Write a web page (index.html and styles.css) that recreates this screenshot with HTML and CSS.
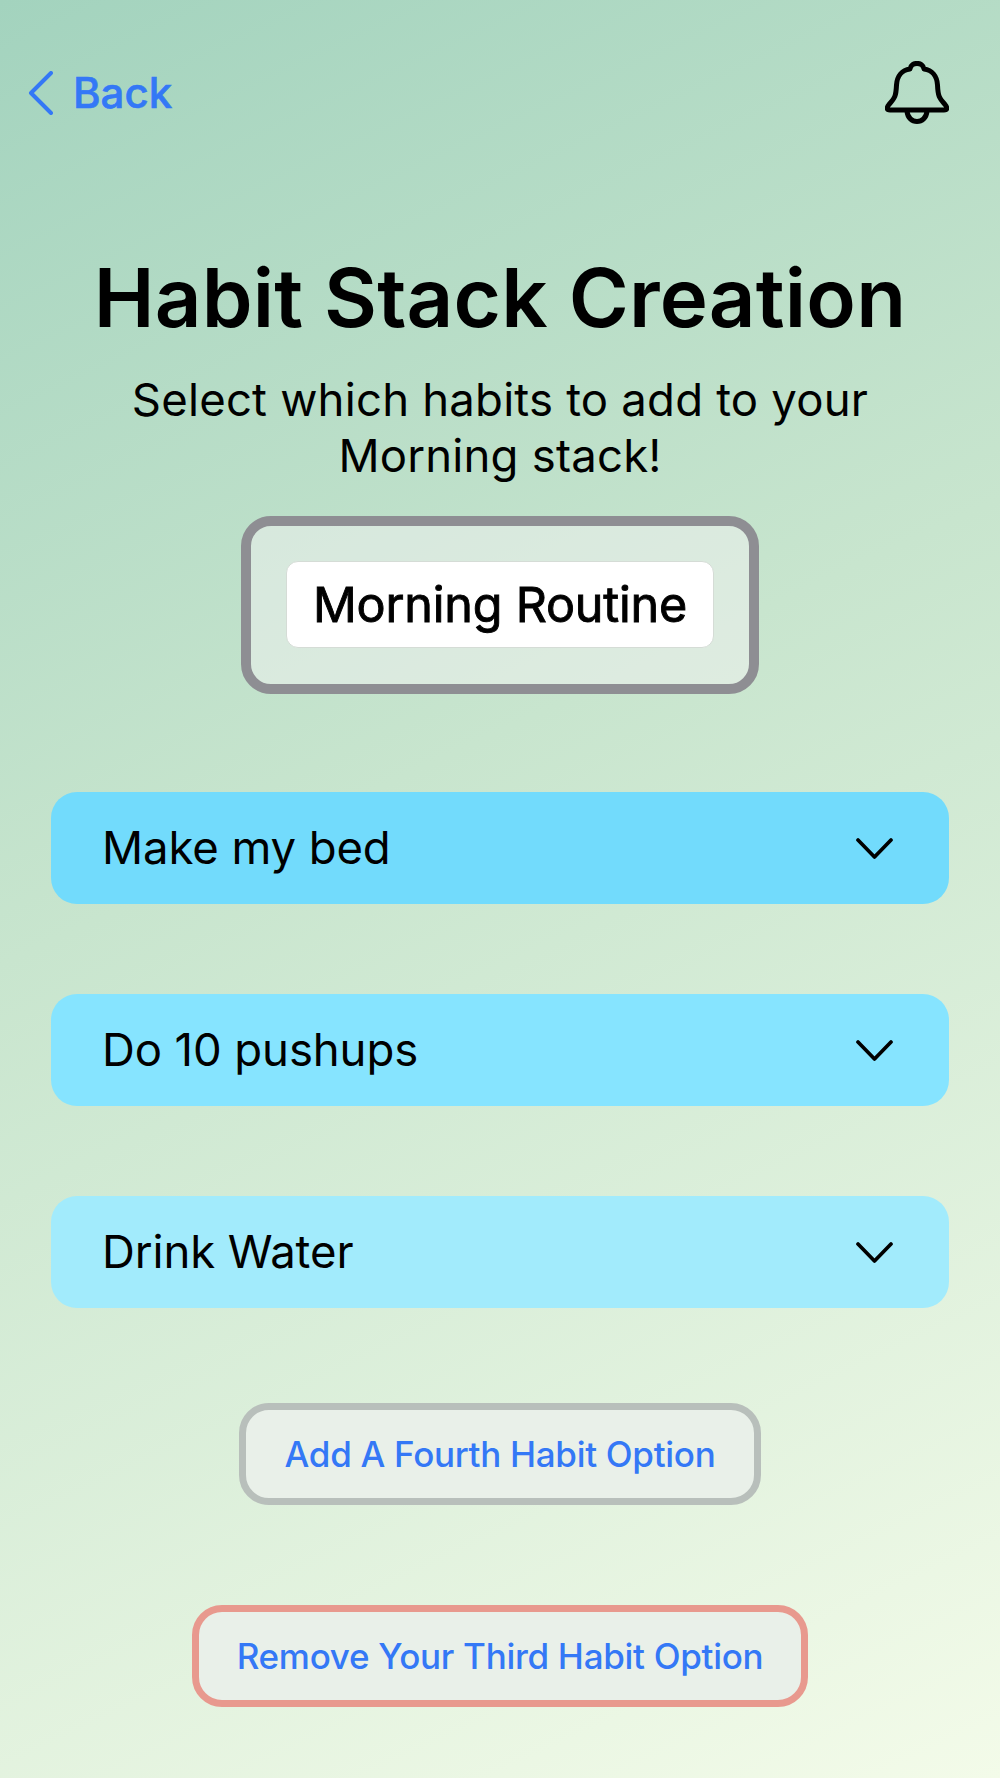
FILE: index.html
```html
<!DOCTYPE html>
<html lang="en">
    <head>
        <meta charset="utf-8">
        <title>Habit Stack Creation</title>
        <link rel="stylesheet" href="styles.css">
    </head>
    <body>
        <div class="top">
            <a class="back">
                <svg width="26" height="44" viewBox="0 0 26 44"><path d="M24 2 L4 22 L24 42"/></svg>
                <span>Back</span>
            </a>
            <svg class="bell" width="64" height="64" viewBox="0 0 64 64">
                <path d="M5 49 H59 C63 49 62 46 60 43.500 C54 37 53 35 52.500 24 C52 15 47 9 39 8 C38 0.500 26 0.500 25 8 C17 9 12 15 11.500 24 C11 35 10 37 4 43.500 C2 46 1 49 5 49 Z"/>
                <path d="M22 50 C23 64 41 64 42 50"/>
            </svg>
        </div>
        <h1>Habit Stack Creation</h1>
        <p class="subtitle">Select which habits to add to your<br>Morning stack!</p>
        <div class="name-box">
            <input class="name" value="Morning Routine">
        </div>
        <div class="habits">
            <button class="habit first"><span>Make my bed</span><svg width="38" height="24" viewBox="0 0 38 24"><path d="M2 4 L18.500 21 L35 4"/></svg></button>
            <button class="habit second"><span>Do 10 pushups</span><svg width="38" height="24" viewBox="0 0 38 24"><path d="M2 4 L18.500 21 L35 4"/></svg></button>
            <button class="habit third"><span>Drink Water</span><svg width="38" height="24" viewBox="0 0 38 24"><path d="M2 4 L18.500 21 L35 4"/></svg></button>
        </div>
        <button class="option add"><span>Add A Fourth Habit Option</span></button>
        <button class="option remove"><span>Remove Your Third Habit Option</span></button>
    </body>
</html>
```
FILE: styles.css
```css
* {box-sizing: border-box;}

body {
        margin: 0;
        height: 1778px;
        display: flex;
        flex-direction: column;
        align-items: center;
        font-family: Inter, sans-serif;
        background: linear-gradient(155deg, #a3d3be, #c8e5ce 43%, #f3fbe9);}

button, input {font-family: inherit;}

svg {
        fill: none;
        stroke: currentColor;
        stroke-linecap: round;
        stroke-linejoin: round;
        stroke-width: 4;}

.top {
        width: 100%;
        height: 125px;
        padding: 61px 51px 0 27px;
        display: flex;
        justify-content: space-between;}

.back {
        display: flex;
        align-items: center;
        height: 64px;
        gap: 20px;
        color: #3478f6;
        font-size: 42px;
        font-weight: 500;
        -webkit-text-stroke: 0.6px #3478f6;}

.back span {margin-top: -1px;}

.bell {stroke-width: 5;}

h1 {
        margin: 121px 0 0;
        font-size: 81.5px;
        line-height: 104px;
        font-weight: 600;
        letter-spacing: 0.2px;
        white-space: nowrap;}

.subtitle {
        margin: 22px 0 0;
        font-size: 45.5px;
        line-height: 56px;
        letter-spacing: 0.2px;
        text-align: center;}

.name-box {
        width: 518px;
        height: 178px;
        margin-top: 32px;
        padding: 35px;
        border: 10px solid #8e8e93;
        border-radius: 30px;
        background: rgba(242, 242, 242, 0.5);}

.name {
        display: block;
        width: 100%;
        height: 87px;
        padding: 0;
        border: 1px solid #d5dcd6;
        border-radius: 12px;
        background: white;
        color: black;
        font-size: 48.5px;
        letter-spacing: -0.2px;
        -webkit-text-stroke: 0.9px black;
        text-align: center;}

.habits {
        width: 898px;
        margin-top: 98px;
        display: flex;
        flex-direction: column;
        gap: 90px;}

.habit {
        height: 112px;
        padding: 0 55px 1px 51px;
        border: none;
        border-radius: 26px;
        display: flex;
        justify-content: space-between;
        align-items: center;
        color: black;
        font-size: 45.5px;
        letter-spacing: -0.1px;}

.habit svg {stroke-width: 3.7;}

.first {background: #72dbfc;}
.second {background: #86e4ff;}
.third {background: #a2ebfc;}

.option {
        height: 102px;
        padding: 0 0 1px;
        border: 7px solid;
        border-radius: 30px;
        background: #e9f0e9;
        color: #3478f6;
        font-size: 35px;
        font-weight: 500;
        letter-spacing: -0.3px;}

.add {
        width: 522px;
        margin-top: 95px;
        border-color: #b8bfbb;}

.remove {
        width: 616px;
        margin-top: 100px;
        border-color: #e8998e;}
```
